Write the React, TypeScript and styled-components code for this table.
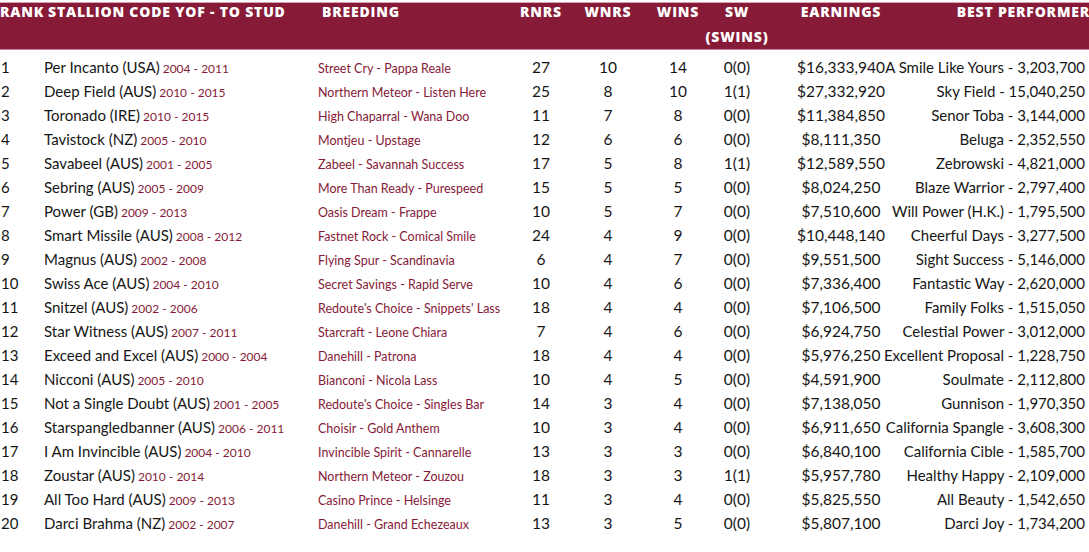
import styled, { createGlobalStyle } from "styled-components";

type Row = {
  rank: number;
  name: string;
  years: string;
  breeding: string;
  rnrs: number;
  wnrs: number;
  wins: number;
  sw: string;
  earnings: string;
  best: string;
};

const ROWS: Row[] = [
  { rank: 1, name: "Per Incanto (USA)", years: "2004 - 2011", breeding: "Street Cry - Pappa Reale", rnrs: 27, wnrs: 10, wins: 14, sw: "0(0)", earnings: "$16,333,940", best: "A Smile Like Yours - 3,203,700" },
  { rank: 2, name: "Deep Field (AUS)", years: "2010 - 2015", breeding: "Northern Meteor - Listen Here", rnrs: 25, wnrs: 8, wins: 10, sw: "1(1)", earnings: "$27,332,920", best: "Sky Field - 15,040,250" },
  { rank: 3, name: "Toronado (IRE)", years: "2010 - 2015", breeding: "High Chaparral - Wana Doo", rnrs: 11, wnrs: 7, wins: 8, sw: "0(0)", earnings: "$11,384,850", best: "Senor Toba - 3,144,000" },
  { rank: 4, name: "Tavistock (NZ)", years: "2005 - 2010", breeding: "Montjeu - Upstage", rnrs: 12, wnrs: 6, wins: 6, sw: "0(0)", earnings: "$8,111,350", best: "Beluga - 2,352,550" },
  { rank: 5, name: "Savabeel (AUS)", years: "2001 - 2005", breeding: "Zabeel - Savannah Success", rnrs: 17, wnrs: 5, wins: 8, sw: "1(1)", earnings: "$12,589,550", best: "Zebrowski - 4,821,000" },
  { rank: 6, name: "Sebring (AUS)", years: "2005 - 2009", breeding: "More Than Ready - Purespeed", rnrs: 15, wnrs: 5, wins: 5, sw: "0(0)", earnings: "$8,024,250", best: "Blaze Warrior - 2,797,400" },
  { rank: 7, name: "Power (GB)", years: "2009 - 2013", breeding: "Oasis Dream - Frappe", rnrs: 10, wnrs: 5, wins: 7, sw: "0(0)", earnings: "$7,510,600", best: "Will Power (H.K.) - 1,795,500" },
  { rank: 8, name: "Smart Missile (AUS)", years: "2008 - 2012", breeding: "Fastnet Rock - Comical Smile", rnrs: 24, wnrs: 4, wins: 9, sw: "0(0)", earnings: "$10,448,140", best: "Cheerful Days - 3,277,500" },
  { rank: 9, name: "Magnus (AUS)", years: "2002 - 2008", breeding: "Flying Spur - Scandinavia", rnrs: 6, wnrs: 4, wins: 7, sw: "0(0)", earnings: "$9,551,500", best: "Sight Success - 5,146,000" },
  { rank: 10, name: "Swiss Ace (AUS)", years: "2004 - 2010", breeding: "Secret Savings - Rapid Serve", rnrs: 10, wnrs: 4, wins: 6, sw: "0(0)", earnings: "$7,336,400", best: "Fantastic Way - 2,620,000" },
  { rank: 11, name: "Snitzel (AUS)", years: "2002 - 2006", breeding: "Redoute's Choice - Snippets' Lass", rnrs: 18, wnrs: 4, wins: 4, sw: "0(0)", earnings: "$7,106,500", best: "Family Folks - 1,515,050" },
  { rank: 12, name: "Star Witness (AUS)", years: "2007 - 2011", breeding: "Starcraft - Leone Chiara", rnrs: 7, wnrs: 4, wins: 6, sw: "0(0)", earnings: "$6,924,750", best: "Celestial Power - 3,012,000" },
  { rank: 13, name: "Exceed and Excel (AUS)", years: "2000 - 2004", breeding: "Danehill - Patrona", rnrs: 18, wnrs: 4, wins: 4, sw: "0(0)", earnings: "$5,976,250", best: "Excellent Proposal - 1,228,750" },
  { rank: 14, name: "Nicconi (AUS)", years: "2005 - 2010", breeding: "Bianconi - Nicola Lass", rnrs: 10, wnrs: 4, wins: 5, sw: "0(0)", earnings: "$4,591,900", best: "Soulmate - 2,112,800" },
  { rank: 15, name: "Not a Single Doubt (AUS)", years: "2001 - 2005", breeding: "Redoute's Choice - Singles Bar", rnrs: 14, wnrs: 3, wins: 4, sw: "0(0)", earnings: "$7,138,050", best: "Gunnison - 1,970,350" },
  { rank: 16, name: "Starspangledbanner (AUS)", years: "2006 - 2011", breeding: "Choisir - Gold Anthem", rnrs: 10, wnrs: 3, wins: 4, sw: "0(0)", earnings: "$6,911,650", best: "California Spangle - 3,608,300" },
  { rank: 17, name: "I Am Invincible (AUS)", years: "2004 - 2010", breeding: "Invincible Spirit - Cannarelle", rnrs: 13, wnrs: 3, wins: 3, sw: "0(0)", earnings: "$6,840,100", best: "California Cible - 1,585,700" },
  { rank: 18, name: "Zoustar (AUS)", years: "2010 - 2014", breeding: "Northern Meteor - Zouzou", rnrs: 18, wnrs: 3, wins: 3, sw: "1(1)", earnings: "$5,957,780", best: "Healthy Happy - 2,109,000" },
  { rank: 19, name: "All Too Hard (AUS)", years: "2009 - 2013", breeding: "Casino Prince - Helsinge", rnrs: 11, wnrs: 3, wins: 4, sw: "0(0)", earnings: "$5,825,550", best: "All Beauty - 1,542,650" },
  { rank: 20, name: "Darci Brahma (NZ)", years: "2002 - 2007", breeding: "Danehill - Grand Echezeaux", rnrs: 13, wnrs: 3, wins: 5, sw: "0(0)", earnings: "$5,807,100", best: "Darci Joy - 1,734,200" },
];

const MAROON = "#861a37";

const GlobalStyle = createGlobalStyle`
  html, body {
    margin: 0;
    padding: 0;
    background: #ffffff;
  }
  body {
    font-family: "Lato", "Open Sans", sans-serif;
    color: #161616;
  }
`;

const COLS = "44px 274px 200px 46px 88px 52px 66px 142px 177px";

const Table = styled.div`
  width: 1089px;
  padding-top: 2px;
`;

const HeaderBar = styled.div`
  display: grid;
  grid-template-columns: ${COLS};
  height: 46px;
  background: ${MAROON};
  border-top: 1px solid #d8a3b1;
  border-bottom: 1px solid #c48594;
  color: #ffffff;
  font-family: "Open Sans", "Lato", sans-serif;
  font-weight: 800;
  font-size: 14px;
  letter-spacing: 0.8px;
  text-transform: uppercase;
`;

const HeadCell = styled.div<{ $align?: "left" | "center" | "right"; $indent?: number }>`
  text-align: ${(p) => p.$align ?? "center"};
  padding-left: ${(p) => p.$indent ?? 0}px;
  margin-right: ${(p) => (p.$align === "right" ? -1 : 0)}px;
  line-height: 25px;
  margin-top: -4px;
  white-space: nowrap;
`;

const Body = styled.div`
  padding-top: 5px;
`;

const DataRow = styled.div`
  display: grid;
  grid-template-columns: ${COLS};
  height: 24px;
  align-items: center;
  white-space: nowrap;
`;

const Rank = styled.div`
  font-size: 15px;
  padding-left: 1px;
`;

const Stallion = styled.div`
  font-size: 15px;
`;

const Years = styled.span`
  font-size: 12px;
  color: ${MAROON};
  margin-left: 3px;
`;

const Breeding = styled.div`
  font-size: 12.5px;
  color: ${MAROON};
  padding-top: 2px;
`;

const Num = styled.div`
  font-size: 15.5px;
  text-align: center;
`;

const Best = styled.div`
  font-size: 15px;
  display: flex;
  justify-content: flex-end;
  padding-right: 4px;
`;

export default function App() {
  return (
    <>
      <GlobalStyle />
      <Table>
        <HeaderBar>
          <HeadCell $align="left">Rank</HeadCell>
          <HeadCell $align="left" $indent={4}>Stallion Code YOF - To Stud</HeadCell>
          <HeadCell $align="left" $indent={4}>Breeding</HeadCell>
          <HeadCell>Rnrs</HeadCell>
          <HeadCell>Wnrs</HeadCell>
          <HeadCell>Wins</HeadCell>
          <HeadCell>
            SW
            <br />
            (SWINS)
          </HeadCell>
          <HeadCell>Earnings</HeadCell>
          <HeadCell $align="right">Best Performer</HeadCell>
        </HeaderBar>
        <Body>
          {ROWS.map((r) => (
            <DataRow key={r.rank}>
              <Rank>{r.rank}</Rank>
              <Stallion>
                {r.name}
                <Years>{r.years}</Years>
              </Stallion>
              <Breeding>{r.breeding}</Breeding>
              <Num>{r.rnrs}</Num>
              <Num>{r.wnrs}</Num>
              <Num>{r.wins}</Num>
              <Num>{r.sw}</Num>
              <Num>{r.earnings}</Num>
              <Best>
                <span>{r.best}</span>
              </Best>
            </DataRow>
          ))}
        </Body>
      </Table>
    </>
  );
}
